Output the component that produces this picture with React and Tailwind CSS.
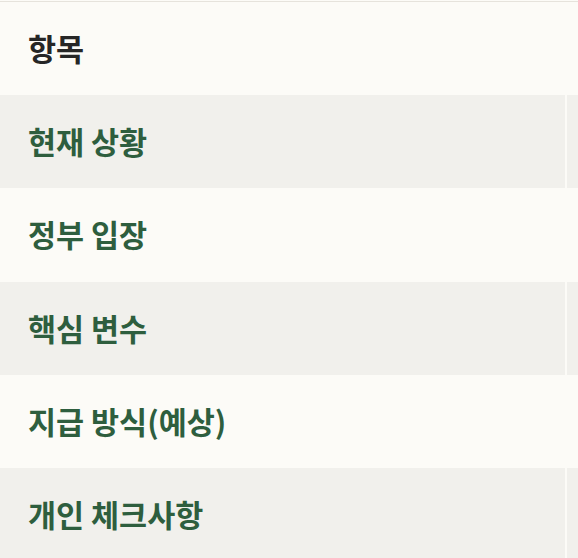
import React from "react";

const rows = [
  { label: "현재 상황", gray: true, h: "h-[93px]" },
  { label: "정부 입장", gray: false, h: "h-[94px]" },
  { label: "핵심 변수", gray: true, h: "h-[93px]" },
  { label: "지급 방식(예상)", gray: false, h: "h-[93px]" },
  { label: "개인 체크사항", gray: true, h: "h-[93px]" },
];

export default function App() {
  return (
    <div
      className="w-[578px] h-[558px] overflow-hidden bg-[#fcfbf7] pt-[1px]"
      style={{ fontFamily: '"Noto Sans CJK KR", "Noto Sans", sans-serif' }}
    >
      <div className="border-t border-[#e6e3dc]">
        <div className="flex h-[93px] bg-[#fcfbf7]">
          <div className="w-[565px] shrink-0 flex items-center pl-[28px] text-[30.5px] font-bold text-[#262626]">
            항목
          </div>
        </div>
        {rows.map((r) => (
          <div key={r.label} className={`flex ${r.h} gap-[2px]`}>
            <div
              className={`w-[565px] shrink-0 flex items-center pl-[28px] text-[30.5px] font-bold text-[#2e5e3e] ${
                r.gray ? "bg-[#f1f0ec]" : "bg-[#fcfbf7]"
              }`}
            >
              {r.label}
            </div>
            <div className={`flex-1 ${r.gray ? "bg-[#f1f0ec]" : "bg-[#fcfbf7]"}`} />
          </div>
        ))}
      </div>
    </div>
  );
}
